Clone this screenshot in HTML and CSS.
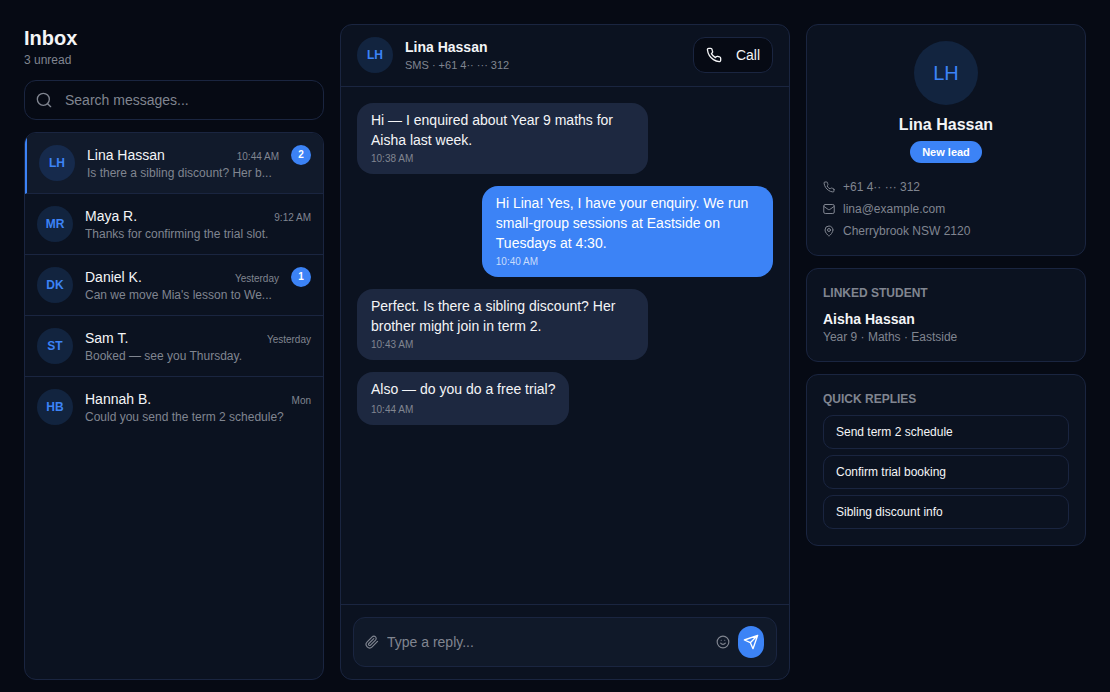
FILE: index.html
```html
<!DOCTYPE html>
<html lang="en">
<head>
    <meta charset="UTF-8">
    <meta name="viewport" content="width=device-width, initial-scale=1.0">
    <title>Inbox</title>
    <link rel="stylesheet" href="styles.css">
</head>
<body>
    <svg class="sprite" aria-hidden="true">
        <symbol id="search" viewBox="0 0 24 24"><circle cx="11" cy="11" r="9"/><path d="m22 22-4.500-4.500"/></symbol>
        <symbol id="phone" viewBox="0 0 24 24"><path d="M22 16.92v3a2 2 0 0 1-2.18 2 19.79 19.79 0 0 1-8.63-3.07 19.5 19.5 0 0 1-6-6 19.79 19.79 0 0 1-3.07-8.67A2 2 0 0 1 4.11 2h3a2 2 0 0 1 2 1.72 12.84 12.84 0 0 0 .7 2.81 2 2 0 0 1-.45 2.11L8.09 9.91a16 16 0 0 0 6 6l1.27-1.27a2 2 0 0 1 2.11-.45 12.84 12.84 0 0 0 2.81.7A2 2 0 0 1 22 16.92z"/></symbol>
        <symbol id="mail" viewBox="0 0 24 24"><rect x="1.500" y="3" width="21" height="18" rx="3"/><path d="m2 7 8.500 6a3 3 0 0 0 3 0L22 7"/></symbol>
        <symbol id="pin" viewBox="0 0 24 24"><path d="M20 10c0 5-5.500 10.200-7.400 11.800a1 1 0 0 1-1.200 0C9.500 20.200 4 15 4 10a8 8 0 0 1 16 0"/><circle cx="12" cy="10" r="3"/></symbol>
        <symbol id="clip" viewBox="0 0 24 24"><path d="m21.440 11.050-9.190 9.190a6 6 0 0 1-8.490-8.490l8.570-8.570A4 4 0 1 1 18 8.840l-8.590 8.570a2 2 0 0 1-2.830-2.830l8.490-8.480"/></symbol>
        <symbol id="smile" viewBox="0 0 24 24"><circle cx="12" cy="12" r="10"/><path d="M8 14s1.500 2 4 2 4-2 4-2M9 9h.01M15 9h.01"/></symbol>
        <symbol id="send" viewBox="0 0 24 24"><path d="M22 2 15 22l-4-9-9-4zM22 2 11 13"/></symbol>
    </svg>

    <div class="app">
        <aside class="sidebar">
            <h1>Inbox</h1>
            <p class="unread">3 unread</p>
            <label class="search">
                <svg class="icon"><use href="#search"/></svg>
                <input type="text" placeholder="Search messages..." aria-label="Search messages">
            </label>
            <ul class="list panel">
                <li class="row active">
                    <span class="avatar">LH</span>
                    <div class="info">
                        <div class="line"><span class="name">Lina Hassan</span><span class="time">10:44 AM</span></div>
                        <p class="preview">Is there a sibling discount? Her b...</p>
                    </div>
                    <span class="badge">2</span>
                </li>
                <li class="row">
                    <span class="avatar">MR</span>
                    <div class="info">
                        <div class="line"><span class="name">Maya R.</span><span class="time">9:12 AM</span></div>
                        <p class="preview">Thanks for confirming the trial slot.</p>
                    </div>
                </li>
                <li class="row">
                    <span class="avatar">DK</span>
                    <div class="info">
                        <div class="line"><span class="name">Daniel K.</span><span class="time">Yesterday</span></div>
                        <p class="preview">Can we move Mia's lesson to We...</p>
                    </div>
                    <span class="badge">1</span>
                </li>
                <li class="row">
                    <span class="avatar">ST</span>
                    <div class="info">
                        <div class="line"><span class="name">Sam T.</span><span class="time">Yesterday</span></div>
                        <p class="preview">Booked — see you Thursday.</p>
                    </div>
                </li>
                <li class="row">
                    <span class="avatar">HB</span>
                    <div class="info">
                        <div class="line"><span class="name">Hannah B.</span><span class="time">Mon</span></div>
                        <p class="preview">Could you send the term 2 schedule?</p>
                    </div>
                </li>
            </ul>
        </aside>

        <main class="chat panel">
            <header class="chat-header">
                <span class="avatar">LH</span>
                <div class="info">
                    <h2>Lina Hassan</h2>
                    <p class="channel">SMS · +61 4·· ··· 312</p>
                </div>
                <button type="button" class="call"><svg class="icon"><use href="#phone"/></svg>Call</button>
            </header>
            <div class="messages">
                <div class="bubble"><p>Hi — I enquired about Year 9 maths for Aisha last week.</p><time>10:38 AM</time></div>
                <div class="bubble sent"><p>Hi Lina! Yes, I have your enquiry. We run small-group sessions at Eastside on Tuesdays at 4:30.</p><time>10:40 AM</time></div>
                <div class="bubble"><p>Perfect. Is there a sibling discount? Her brother might join in term 2.</p><time>10:43 AM</time></div>
                <div class="bubble"><p>Also — do you do a free trial?</p><time>10:44 AM</time></div>
            </div>
            <form class="composer">
                <div class="reply">
                    <svg class="icon medium"><use href="#clip"/></svg>
                    <input type="text" placeholder="Type a reply..." aria-label="Type a reply">
                    <svg class="icon medium"><use href="#smile"/></svg>
                    <button type="button" class="send" aria-label="Send"><svg class="icon"><use href="#send"/></svg></button>
                </div>
            </form>
        </main>

        <aside class="details">
            <section class="card panel">
                <div class="profile">
                    <span class="avatar large">LH</span>
                    <h2>Lina Hassan</h2>
                    <span class="tag">New lead</span>
                </div>
                <ul class="contact">
                    <li><svg class="icon small"><use href="#phone"/></svg>+61 4·· ··· 312</li>
                    <li><svg class="icon small"><use href="#mail"/></svg>lina@example.com</li>
                    <li><svg class="icon small"><use href="#pin"/></svg>Cherrybrook NSW 2120</li>
                </ul>
            </section>
            <section class="card panel">
                <h3>LINKED STUDENT</h3>
                <p class="student">Aisha Hassan</p>
                <p class="meta">Year 9 · Maths · Eastside</p>
            </section>
            <section class="card panel">
                <h3>QUICK REPLIES</h3>
                <div class="replies">
                    <button type="button">Send term 2 schedule</button>
                    <button type="button">Confirm trial booking</button>
                    <button type="button">Sibling discount info</button>
                </div>
            </section>
        </aside>
    </div>
</body>
</html>
```
FILE: styles.css
```css
* {
    margin: 0;
    padding: 0;
    box-sizing: border-box;
}

body {
    font-family: "Liberation Sans", Arial, sans-serif;
    font-size: 14px;
    line-height: 20px;
    background-color: #060a14;
    color: #f4f5f7;
}

ul {
    list-style: none;
}

button,
input {
    font: inherit;
    color: inherit;
    background: none;
    border: none;
    outline: none;
}

button {
    cursor: pointer;
}

input::placeholder {
    color: #808590;
    opacity: 1;
}

.sprite {
    display: none;
}

.icon {
    flex: none;
    width: 16px;
    height: 16px;
    fill: none;
    stroke: currentColor;
    stroke-width: 2;
    stroke-linecap: round;
    stroke-linejoin: round;
}

.icon.medium {
    width: 14px;
    height: 14px;
    color: #808590;
}

.icon.small {
    width: 12px;
    height: 12px;
}

.app {
    display: grid;
    grid-template-columns: 300px 1fr 280px;
    gap: 16px;
    height: 100vh;
    padding: 24px 24px 12px;
}

.panel {
    background-color: #0b1220;
    border: 1px solid #1a2540;
    border-radius: 12px;
}

.sidebar {
    display: flex;
    flex-direction: column;
    min-height: 0;
}

h1 {
    font-size: 20px;
    line-height: 28px;
    font-weight: bold;
}

.unread,
.preview,
.meta {
    font-size: 12px;
    line-height: 16px;
    color: #808590;
}

.channel {
    font-size: 11px;
    line-height: 16px;
    color: #808590;
}

.search {
    display: flex;
    align-items: center;
    gap: 13px;
    height: 40px;
    margin: 12px 0;
    padding: 0 11px;
    border: 1px solid #1a2540;
    border-radius: 12px;
    color: #808590;
}

.search input,
.reply input {
    flex: 1;
    min-width: 0;
}

.list {
    flex: 1;
    overflow: hidden;
}

.row {
    display: flex;
    gap: 12px;
    padding: 12px;
    border-bottom: 1px solid #1a2540;
}

.row:last-child {
    border-bottom: none;
}

.row.active {
    background-color: #111a2b;
    border-left: 2px solid #3c83f6;
}

.avatar {
    flex: none;
    display: flex;
    align-items: center;
    justify-content: center;
    width: 36px;
    height: 36px;
    border-radius: 50%;
    background-color: #12243f;
    color: #3c83f6;
    font-size: 12px;
    font-weight: bold;
}

.row.active .avatar {
    background-color: #162a4c;
}

.avatar.large {
    width: 64px;
    height: 64px;
    font-size: 20px;
    font-weight: normal;
}

.info {
    flex: 1;
    min-width: 0;
}

.line {
    display: flex;
    align-items: baseline;
    justify-content: space-between;
    height: 20px;
}

.time {
    font-size: 10px;
    line-height: 16px;
    color: #808590;
}

.preview {
    overflow: hidden;
    white-space: nowrap;
    text-overflow: ellipsis;
}

.badge {
    flex: none;
    width: 20px;
    height: 20px;
    border-radius: 10px;
    background-color: #3c83f6;
    color: #fff;
    font-size: 10px;
    font-weight: bold;
    text-align: center;
}

.chat {
    display: flex;
    flex-direction: column;
    min-width: 0;
    min-height: 0;
}

.chat-header {
    display: flex;
    gap: 12px;
    padding: 12px 16px 13px;
    border-bottom: 1px solid #1a2540;
}

h2 {
    font-size: 14px;
    line-height: 20px;
}

.call {
    display: flex;
    align-items: center;
    gap: 14px;
    height: 36px;
    padding: 0 12px;
    background-color: #060a14;
    border: 1px solid #1a2540;
    border-radius: 12px;
}

.messages {
    flex: 1;
    display: flex;
    flex-direction: column;
    align-items: flex-start;
    gap: 12px;
    padding: 16px;
    overflow: hidden;
}

.bubble {
    display: flex;
    flex-direction: column;
    justify-content: space-between;
    max-width: 70%;
    min-height: 53px;
    padding: 7px 14px;
    border-radius: 16px;
    background-color: #1d2840;
}

.bubble time {
    font-size: 10px;
    line-height: 17px;
    color: #808590;
}

.bubble.sent {
    align-self: flex-end;
    background-color: #3c83f6;
    color: #fff;
}

.bubble.sent time {
    color: #c8dcfc;
}

.composer {
    padding: 12px;
    border-top: 1px solid #1a2540;
}

.reply {
    display: flex;
    align-items: center;
    gap: 8px;
    height: 50px;
    padding: 0 12px 0 11px;
    background-color: #101929;
    border: 1px solid #1a2540;
    border-radius: 12px;
}

.send {
    display: flex;
    align-items: center;
    justify-content: center;
    width: 26px;
    height: 32px;
    border-radius: 13px;
    background-color: #3c83f6;
    color: #fff;
}

.details {
    display: flex;
    flex-direction: column;
    gap: 12px;
}

.card {
    padding: 16px;
}

.profile {
    display: flex;
    flex-direction: column;
    align-items: center;
}

.profile h2 {
    margin: 9px 0 5px;
    font-size: 16px;
    line-height: 22px;
}

.tag {
    padding: 3px 12px;
    border-radius: 11px;
    background-color: #3c83f6;
    color: #fff;
    font-size: 11px;
    line-height: 16px;
    font-weight: bold;
}

.contact {
    display: grid;
    gap: 6px;
    margin-top: 16px;
}

.contact li {
    display: flex;
    align-items: center;
    gap: 8px;
    font-size: 12px;
    line-height: 16px;
    color: #808590;
}

h3 {
    margin-bottom: 8px;
    font-size: 12px;
    line-height: 16px;
    color: #808590;
}

.student {
    font-weight: bold;
}

.replies {
    display: grid;
    gap: 6px;
}

.replies button {
    height: 34px;
    padding: 0 12px;
    border: 1px solid #1a2540;
    border-radius: 10px;
    font-size: 12px;
    text-align: left;
}
```
